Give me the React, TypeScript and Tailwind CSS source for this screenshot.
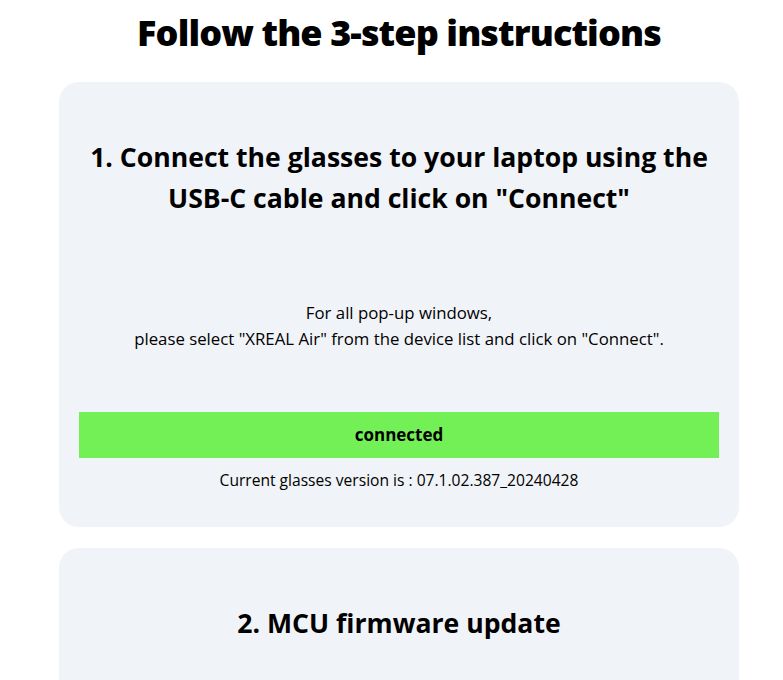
import React from 'react';

const font = { fontFamily: '"Open Sans", "Liberation Sans", sans-serif' };

const StepCard: React.FC<{ title: React.ReactNode; children?: React.ReactNode }> = ({ title, children }) => (
    <div className="w-full bg-[#f0f3f7] rounded-[20px] px-5 pt-[55px] pb-[36px] flex flex-col items-center">
        <h2 className="text-[26.6px] leading-[41px] font-bold text-black text-center">{title}</h2>
        {children}
    </div>
);

export default function App() {
    return (
        <div className="min-h-screen bg-white text-black" style={font}>
            <div className="w-[680px] ml-[59px] flex flex-col gap-[21px]">
                {/* 상단 타이틀 */}
                <h1 className="mt-[6px] mb-[1px] text-[36px] leading-[54px] font-extrabold text-center tracking-tight">
                    Follow the 3-step instructions
                </h1>

                {/* 1단계 */}
                <StepCard
                    title={
                        <>
                            1. Connect the glasses to your laptop using the
                            <br />
                            USB-C cable and click on "Connect"
                        </>
                    }
                >
                    <p className="mt-[81px] text-[16.8px] leading-[26px] text-center">
                        For all pop-up windows,
                        <br />
                        please select "XREAL Air" from the device list and click on "Connect".
                    </p>
                    <button className="mt-[60px] w-full h-[46px] bg-[#72f055] text-[17px] font-bold">
                        connected
                    </button>
                    <p className="mt-[11px] text-[15.6px] leading-[22px]">
                        Current glasses version is : 07.1.02.387_20240428
                    </p>
                </StepCard>

                {/* 2단계 */}
                <StepCard title="2. MCU firmware update">
                    <div className="h-40" />
                </StepCard>
            </div>
        </div>
    );
}
